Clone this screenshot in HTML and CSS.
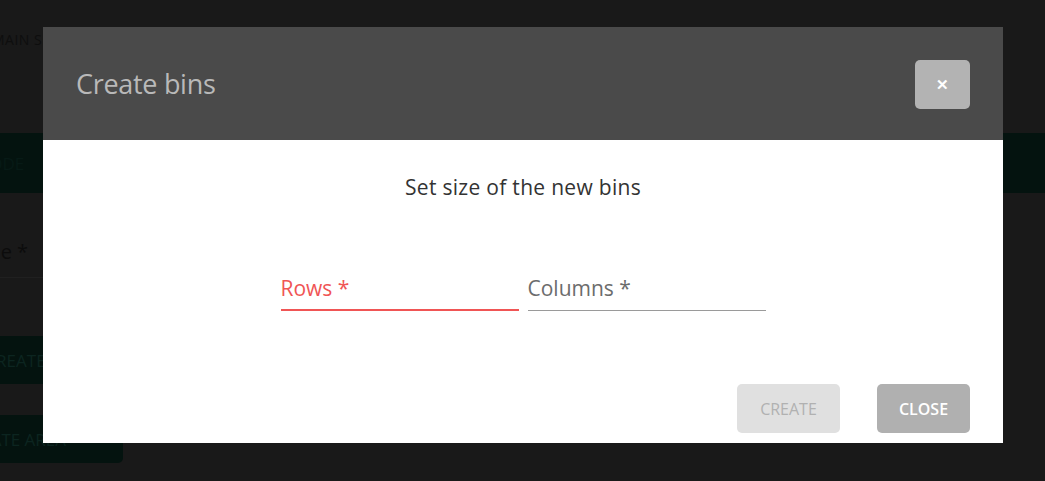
FILE: index.html
```html
<!DOCTYPE html>
<html lang="en">
<head>
    <meta charset="UTF-8">
    <meta name="viewport" content="width=device-width, initial-scale=1.0">
    <title>Create bins</title>
    <link rel="stylesheet" href="styles.css">
</head>
<body>

    <div class="page">
        <div class="page-title">MAIN SETTINGS</div>
        <div class="nav">
            <span class="nav-item">MODE</span>
        </div>
        <div class="field-bg">
            <span class="field-bg-label">Name *</span>
        </div>
        <div class="page-btn wide">RE-CREATE BINS</div>
        <div class="page-btn">CREATE AREA</div>
    </div>

    <div class="overlay">
        <div class="modal">
            <div class="modal-header">
                <h2 class="modal-title">Create bins</h2>
                <button class="close-x">&#10005;</button>
            </div>
            <div class="modal-body">
                <p class="intro">Set size of the new bins</p>
                <div class="fields">
                    <label class="field active">
                        <span class="label">Rows *</span>
                    </label>
                    <label class="field">
                        <span class="label">Columns *</span>
                    </label>
                </div>
                <div class="actions">
                    <button class="btn btn-disabled">CREATE</button>
                    <button class="btn btn-close">CLOSE</button>
                </div>
            </div>
        </div>
    </div>

</body>
</html>
```

FILE: styles.css
```css
body {
    margin: 0;
    background-color: #191919;
    font-family: "Open Sans", Arial, sans-serif;
    overflow: hidden;
}
.page {
    height: 481px;
    color: #0e0e0e;
}
.page-title {
    padding: 30px 0 0 0;
    margin-left: -8px;
    height: 133px;
    box-sizing: border-box;
    font-size: 14px;
    letter-spacing: 0.5px;
}
.nav {
    height: 60px;
    background: #04130f;
    display: flex;
    align-items: center;
}
.nav-item {
    margin-left: -26px;
    font-size: 17px;
    color: #071a16;
}
.field-bg {
    height: 85px;
    width: 300px;
    border-bottom: 1px solid #202020;
    display: flex;
    align-items: flex-end;
    padding-bottom: 12px;
    box-sizing: border-box;
}
.field-bg-label {
    margin-left: -44px;
    font-size: 20px;
    color: #0c0c0c;
}
.page-btn {
    margin-top: 58px;
    margin-left: -40px;
    width: 163px;
    height: 48px;
    border-radius: 5px;
    background: #04130f;
    color: #0c2520;
    font-size: 17px;
    display: flex;
    align-items: center;
    box-sizing: border-box;
}
.page-btn.wide {
    width: 240px;
}
.page-btn + .page-btn {
    margin-top: 31px;
}
.overlay {
    position: fixed;
    inset: 0;
}
.modal {
    position: absolute;
    left: 43px;
    top: 27px;
    width: 960px;
    height: 416px;
    background: #ffffff;
    display: flex;
    flex-direction: column;
}
.modal-header {
    height: 113px;
    background: #4a4a4a;
    display: flex;
    align-items: center;
    justify-content: space-between;
    padding: 0 33px;
}
.modal-title {
    margin: 0;
    font-weight: normal;
    font-size: 27px;
    color: #b9b9b9;
    letter-spacing: -0.3px;
}
.close-x {
    width: 55px;
    height: 49px;
    border: none;
    border-radius: 5px;
    background: #b3b3b3;
    color: #ffffff;
    font-size: 15px;
    font-weight: bold;
    margin-top: 2px;
}
.modal-body {
    flex: 1;
    display: flex;
    flex-direction: column;
    align-items: center;
}
.intro {
    margin: 33px 0 0 0;
    font-size: 21px;
    color: #333333;
    letter-spacing: 0.3px;
}
.fields {
    display: flex;
    gap: 9px;
    margin-top: 73px;
}
.field {
    width: 238px;
    height: 37px;
    border-bottom: 1px solid #9a9a9a;
    box-sizing: border-box;
    display: flex;
    align-items: flex-start;
}
.field.active {
    border-bottom: 2px solid #f05555;
}
.label {
    font-size: 21px;
    color: #6c6c6c;
    line-height: 28px;
}
.field.active .label {
    color: #f05555;
}
.actions {
    align-self: flex-end;
    display: flex;
    gap: 37px;
    margin: 73px 33px 0 0;
}
.btn {
    height: 49px;
    border: none;
    border-radius: 5px;
    font-family: "Open Sans", Arial, sans-serif;
    font-size: 16px;
    padding: 0;
}
.btn-disabled {
    width: 103px;
    background: #e0e0e0;
    color: #b1b1b1;
}
.btn-close {
    width: 93px;
    background: #b0b0b0;
    color: #ffffff;
    font-weight: 600;
}
```
